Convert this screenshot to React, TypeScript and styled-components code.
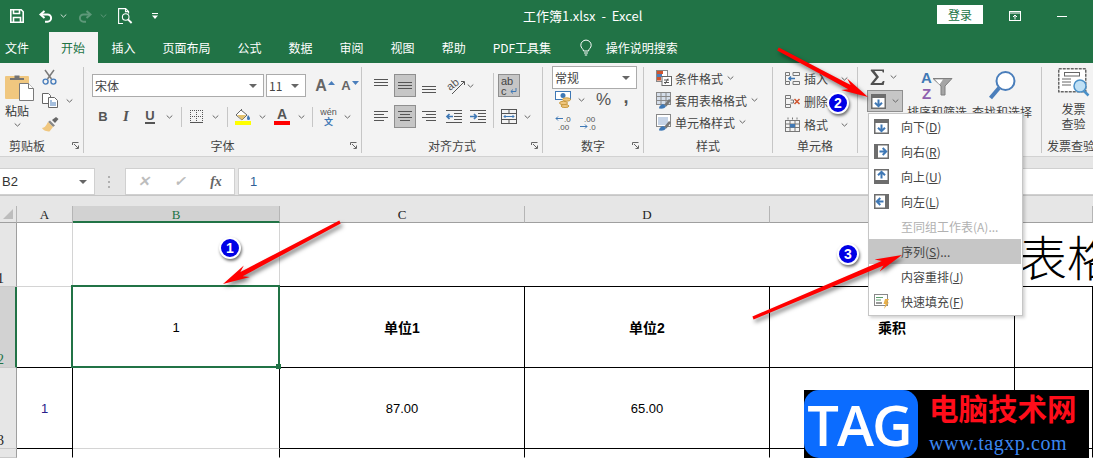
import React from "react";
import styled, { createGlobalStyle } from "styled-components";

const UI = `"Noto Sans CJK SC", "Noto Sans", sans-serif`;
const LATIN = `"Liberation Sans", "Noto Sans CJK SC", sans-serif`;
const GREEN = "#217346";

const Global = createGlobalStyle`
  html, body { margin: 0; padding: 0; background: #fff; }
  body { font-family: ${UI}; font-size: 12px; color: #444; }
  svg { overflow: visible; }
`;

const Page = styled.div`
  position: relative; width: 1093px; height: 458px; overflow: hidden; background: #fff;
`;
const TitleBar = styled.div`
  display: flex; align-items: center; height: 32px; background: ${GREEN}; color: #fff;
`;
const Qat = styled.div`
  display: flex; align-items: center; width: 523px; padding-left: 10px; box-sizing: border-box;
`;
const QatSlot = styled.span<{ $ml?: number }>`
  display: flex; margin-left: ${p => p.$ml ?? 0}px;
`;
const DocTitle = styled.div`
  font-family: ${UI}; font-size: 13px; line-height: 18px; white-space: pre;
`;
const WindowControls = styled.div`
  display: flex; align-items: center; margin-left: auto; padding-right: 26px;
`;
const Login = styled.div`
  width: 46px; height: 19px; background: #fff; color: ${GREEN}; text-align: center;
  line-height: 19px; font-size: 12px; margin-top: -3px;
`;
const TabBar = styled.div`
  display: flex; align-items: stretch; height: 31px; background: ${GREEN}; padding-left: 5px;
  color: #fff; box-sizing: border-box;
`;
const Tab = styled.div<{ $active?: boolean; $file?: boolean }>`
  display: flex; align-items: center; padding: ${p => (p.$file ? "0" : p.$active ? "0 13px 0 12px" : "0 13.5px")};
  margin-right: ${p => (p.$file ? 20 : 0)}px;
  background: ${p => (p.$active ? "#f3f3f3" : "transparent")};
  color: ${p => (p.$active ? GREEN : "#fff")};
  font-size: 12px; white-space: nowrap;
`;
const TellMe = styled.div`
  display: flex; align-items: center; gap: 14px; margin-left: 15px; font-size: 12px;
`;
const Ribbon = styled.div`
  display: flex; height: 94px; box-sizing: border-box; padding-top: 4px; background: #f3f3f3;
  border-bottom: 1px solid #d2d2d2; color: #444;
`;
const Group = styled.div<{ $w: number; $last?: boolean }>`
  display: flex; flex-direction: column; flex: none; width: ${p => p.$w}px; height: 86px; box-sizing: border-box;
  border-right: ${p => (p.$last ? "none" : "1px solid #c6c6c6")};
`;
const GroupBody = styled.div<{ $pl?: number; $row?: boolean }>`
  flex: 1; min-height: 0; display: flex; flex-direction: ${p => (p.$row ? "row" : "column")};
  padding-left: ${p => p.$pl ?? 0}px;
`;
const GroupLabel = styled.div<{ $left?: number }>`
  position: relative; flex: none; height: 14px; line-height: 14px; font-size: 12px; white-space: nowrap;
  text-align: ${p => (p.$left ? "left" : "center")}; padding-left: ${p => p.$left ?? 0}px; color: #444;
`;
const Launcher = styled.span`
  position: absolute; right: 4px; top: 3px; display: flex;
`;
const Stack = styled.div<{ $gap?: number; $pt?: number; $w?: number; $ml?: number; $center?: boolean }>`
  display: flex; flex-direction: column; gap: ${p => p.$gap ?? 0}px; padding-top: ${p => p.$pt ?? 0}px;
  margin-left: ${p => p.$ml ?? 0}px; ${p => (p.$w ? `width: ${p.$w}px;` : "")}
  ${p => (p.$center ? "align-items: center;" : "")} flex: none;
`;
const ToolRow = styled.div<{ $h?: number; $mt?: number }>`
  display: flex; align-items: center; height: ${p => p.$h ?? 23}px; margin-top: ${p => p.$mt ?? 0}px;
`;
const Tool = styled.div<{ $w: number; $ml?: number; $mt?: number; $on?: boolean; $h?: number }>`
  display: flex; align-items: center; justify-content: center; flex: none; width: ${p => p.$w}px;
  margin-left: ${p => p.$ml ?? 0}px; margin-top: ${p => p.$mt ?? 0}px; height: ${p => p.$h ?? 23}px; box-sizing: border-box;
  ${p => (p.$on ? "background: #c6c6c6; border: 1px solid #8f8f8f;" : "")}
  font-family: ${LATIN}; color: #555;
`;
const BoldGlyph = styled.span`
  font-weight: 700; font-size: 13px; color: #555;
`;
const ItalicGlyph = styled.span`
  font-family: "Liberation Serif", serif; font-style: italic; font-weight: 700; font-size: 15px; color: #555;
`;
const UnderGlyph = styled.span`
  font-weight: 700; font-size: 13px; color: #555; border-bottom: 2px solid #555; line-height: 13px;
`;
const SizeA = styled.span<{ $s: number }>`
  font-family: ${LATIN}; font-weight: 700; font-size: ${p => p.$s}px; color: #666; line-height: 1;
`;
const SizeMark = styled.span`
  display: flex; align-self: flex-start; margin: 7px 0 0 1px;
`;
const ColorA = styled.span<{ $c: string }>`
  display: flex; flex-direction: column; align-items: center; width: 16px;
  &::after { content: ""; width: 16px; height: 4px; background: ${p => p.$c}; }
`;
const ColorAGlyph = styled.span`
  font-family: ${LATIN}; font-weight: 700; font-size: 14px; line-height: 13px; color: #555;
`;
const Pinyin = styled.span`
  display: flex; flex-direction: column; align-items: center; font-size: 9px; line-height: 10px; color: #555;
  font-family: ${LATIN};
  b { font-weight: 700; color: #3f78b5; font-family: ${UI}; line-height: 10px; font-size: 9px; }
`;
const Percent = styled.span`
  font-family: ${LATIN}; font-size: 17px; color: #555;
`;
const Comma = styled.span`
  font-family: ${LATIN}; font-size: 18px; font-weight: 700; color: #555; line-height: 10px; margin-top: -6px;
`;
const Divider = styled.div<{ $h?: number; $ml?: number }>`
  flex: none; width: 1px; height: ${p => p.$h ?? 20}px; background: #c6c6c6; margin-left: ${p => p.$ml ?? 0}px;
`;
const Combo = styled.div<{ $w: number; $mt?: number }>`
  display: flex; align-items: center; justify-content: space-between; flex: none; width: ${p => p.$w}px;
  height: 23px; box-sizing: border-box; margin-top: ${p => p.$mt ?? 0}px; background: #fff; border: 1px solid #ababab;
  padding: 0 6px 0 2px; font-size: 12px; color: #444;
`;
const Triangle = styled.span`
  width: 0; height: 0; border-left: 4px solid transparent; border-right: 4px solid transparent;
  border-top: 4px solid #666;
`;
const PasteText = styled.div`
  font-size: 12px; line-height: 14px; margin-top: 3px; color: #333; width: 24px;
`;
const ListRow = styled.div<{ $h: number; $gap: number }>`
  display: flex; align-items: center; gap: ${p => p.$gap}px; height: ${p => p.$h}px; white-space: nowrap;
  font-size: 12px;
`;
const CaretGap = styled.span`
  margin-left: 1px; display: flex;
`;
const FillButton = styled.div`
  display: flex; align-items: center; gap: 6px; width: 36px; height: 22px; box-sizing: border-box; padding-left: 3px;
  background: #c6c6c6; border: 1px solid #8f8f8f; margin-top: 5px;
`;
const SumRow = styled.div`
  display: flex; align-items: center; gap: 5px; height: 17px; padding-left: 3px; margin-top: 1px;
`;
const TallButton = styled.div<{ $w: number; $ml: number }>`
  display: flex; flex-direction: column; align-items: center; flex: none; width: ${p => p.$w}px;
  margin-left: ${p => p.$ml}px; padding-top: 3px; font-size: 12px; white-space: nowrap;
`;
const TallIcon = styled.div`
  display: flex; align-items: center; justify-content: center; height: 31px;
`;
const TallText = styled.div<{ $mt?: number }>`
  margin-top: ${p => p.$mt ?? 0}px; line-height: 15px; text-align: center; color: #444;
`;
const FormulaBar = styled.div`
  display: flex; align-items: stretch; height: 39px; box-sizing: border-box; padding-top: 11px; background: #e6e6e6;
  border-bottom: 1px solid #c6c6c6;
`;
const NameBox = styled.div`
  display: flex; align-items: center; justify-content: space-between; width: 96px; box-sizing: border-box;
  background: #fff; border: 1px solid #d0d0d0; margin-left: -1px; padding: 0 7px 0 2px;
  font-family: ${LATIN}; font-size: 13px; color: #333;
`;
const Grip = styled.div`
  display: flex; flex-direction: column; justify-content: center; gap: 3px; margin: 0 14px 0 13px; width: 3px;
  i { display: block; width: 2px; height: 2px; background: #b0b0b0; }
`;
const FormulaButtons = styled.div`
  display: flex; align-items: center; width: 110px; box-sizing: border-box; background: #fff; border: 1px solid #d0d0d0;
`;
const FxSlot = styled.div<{ $dim?: boolean }>`
  display: flex; align-items: center; justify-content: center; width: 36px; font-family: "Liberation Serif", serif;
  font-style: italic; font-size: 14px; font-weight: 700; color: ${p => (p.$dim ? "#bdbdbd" : "#666")};
`;
const FormulaInput = styled.div`
  flex: 1; display: flex; align-items: center; margin-left: 3px; padding-left: 11px; background: #fff;
  border: 1px solid #d0d0d0; border-right: none; font-family: ${LATIN}; font-size: 13px; color: #2f5f97;
`;
const Sheet = styled.div`
  display: grid; grid-template-columns: 17px 56px 207px 245px 245px 245px 78px;
  grid-template-rows: 17px 64px 81px 81px 9px; padding-top: 10px; background: #e6e6e6;
`;
const Corner = styled.div`
  background: #e6e6e6; border-right: 1px solid #b5b5b5; border-bottom: 1px solid #9f9f9f; box-sizing: border-box;
  display: flex; align-items: flex-end; justify-content: flex-end; padding: 0 3px 3px 0;
  &::after { content: ""; border-left: 10px solid transparent; border-bottom: 10px solid #bdbdbd; }
`;
const ColHead = styled.div<{ $sel?: boolean }>`
  display: flex; align-items: center; justify-content: center; box-sizing: border-box; padding-top: 2px;
  font-family: "Liberation Serif", serif; font-size: 13px;
  background: ${p => (p.$sel ? "#d2d2d2" : "#e6e6e6")};
  color: ${p => (p.$sel ? GREEN : "#222")};
  border-right: 1px solid #b5b5b5;
  border-bottom: ${p => (p.$sel ? `2px solid ${GREEN}` : "1px solid #9f9f9f")};
`;
const RowHead = styled.div<{ $sel?: boolean; $dark?: boolean }>`
  display: flex; align-items: flex-end; box-sizing: border-box; font-family: "Liberation Serif", serif; font-size: 14px;
  line-height: 14px; overflow: hidden; margin-left: 0;
  background: ${p => (p.$sel ? "#d2d2d2" : "#e6e6e6")};
  color: ${p => (p.$sel ? GREEN : "#222")};
  border-right: ${p => (p.$sel ? `2px solid ${GREEN}` : "1px solid #9f9f9f")};
  border-bottom: 1px solid ${p => (p.$dark ? "#bdbdbd" : "#c9c9c9")};
  span { margin-left: -3px; }
`;
const Cell = styled.div<{ $b?: string; $r?: string }>`
  display: flex; align-items: center; justify-content: center; box-sizing: border-box; background: #fff;
  border-bottom: 1px solid ${p => p.$b ?? "#000"}; border-right: 1px solid ${p => p.$r ?? "#000"};
  font-family: ${LATIN}; font-size: 13px; color: #000;
`;
const MergedTitle = styled.div`
  grid-column: span 4; display: flex; align-items: center; justify-content: flex-start; overflow: hidden;
  box-sizing: border-box; background: #fff; border-bottom: 1px solid #000; padding: 0 0 0 739px;
  font-family: "Noto Sans CJK SC", sans-serif; font-weight: 300; font-size: 48px; line-height: 56px; color: #000;
  white-space: nowrap;
`;
const HeadCell = styled(Cell)`
  font-family: ${LATIN}; font-weight: 700; font-size: 14px;
`;
const SeqNumber = styled(Cell)`
  color: #27208a; padding-top: 1px;
`;
const ActiveCell = styled(Cell)`
  position: relative; z-index: 1; padding-top: 1px;
  &::before { content: ""; position: absolute; inset: -2px -1px -1px -2px; border: 2px solid ${GREEN}; pointer-events: none; }
  &::after { content: ""; position: absolute; right: -2px; bottom: -2px; width: 5px; height: 5px; background: ${GREEN}; }
`;
const Menu = styled.div`
  position: absolute; left: 868px; top: 113px; width: 155px; height: 203px; box-sizing: border-box; padding: 0 1px 0 0;
  background: #fff; border: 1px solid #c6c6c6; box-shadow: 2px 2px 3px rgba(0, 0, 0, 0.18); z-index: 5;
`;
const MenuItem = styled.div<{ $hi?: boolean; $off?: boolean }>`
  display: flex; align-items: center; height: 25px; background: ${p => (p.$hi ? "#c6c6c6" : "transparent")};
  color: ${p => (p.$off ? "#b1b1b1" : "#444")}; font-size: 12px; white-space: nowrap; padding-left: 5px;
  u { text-underline-offset: 1px; }
`;
const MenuIcon = styled.span`
  display: flex; width: 27px; flex: none;
`;
const ArrowLayer = styled.svg`
  position: absolute; left: 0; top: 0; z-index: 6; pointer-events: none; overflow: visible;
  polygon { filter: drop-shadow(2px 3px 2px rgba(0, 0, 0, 0.5)); }
`;
const Badge = styled.div<{ $x: number; $y: number }>`
  position: absolute; left: ${p => p.$x - 11}px; top: ${p => p.$y - 11}px; width: 22px; height: 22px; box-sizing: border-box;
  border-radius: 50%; background: #0000e6; border: 2px solid #fff; box-shadow: 1px 2px 3px rgba(0, 0, 0, 0.55);
  color: #fff; font-family: ${LATIN}; font-weight: 700; font-size: 14px; line-height: 18px; text-align: center; z-index: 7;
`;
const Logo = styled.div`
  position: absolute; left: 804px; top: 390px; width: 285px; height: 68px; display: flex; background: #000; z-index: 4;
`;
const LogoMark = styled.div`
  width: 114px; height: 68px; border-radius: 15px; background: #0b6cff; color: #fff; display: flex;
  align-items: center; justify-content: center; font-family: "Open Sans", sans-serif; font-weight: 600; font-size: 56px;
  letter-spacing: -2px; line-height: 68px; padding-right: 4px; box-sizing: border-box;
`;
const LogoText = styled.div`
  display: flex; flex-direction: column; padding-left: 11px;
`;
const LogoCn = styled.div`
  font-family: "Noto Sans CJK SC", sans-serif; font-weight: 700; color: #ff0d1a; font-size: 29.5px; line-height: 34px;
  margin-top: 0; white-space: nowrap;
`;
const LogoUrl = styled.div`
  font-family: "Liberation Serif", serif; color: #3b86f0; font-size: 20px; line-height: 22px; margin-top: 8px;
  white-space: nowrap; letter-spacing: 0.55px;
`;

/* ---------- drawings ---------- */
const Caret = ({ c = "#666" }: { c?: string }) => (
  <svg width="7" height="4" viewBox="0 0 7 4"><path d="M.7.5l2.8 2.6L6.3.5" fill="none" stroke={c} /></svg>
);
const LaunchIcon = () => (
  <svg width="7" height="7" viewBox="0 0 7 7" fill="none" stroke="#666"><path d="M.5 3V.5H6.5M2 2l4 4M6.5 3.5v3H3.5" /></svg>
);
const SaveIcon = () => (
  <svg width="14" height="14" viewBox="0 0 14 14" fill="none" stroke="#fff" strokeWidth="1.6">
    <path d="M.8.8h10.4l2 2v10.4H.8z" /><path d="M3.5 1v3.5h6V1" /><path d="M3.5 13V8.5h7V13" />
  </svg>
);
const UndoIcon = ({ c = "#fff", flip }: { c?: string; flip?: boolean }) => (
  <svg width="14" height="13" viewBox="0 0 14 13" fill="none" stroke={c} strokeWidth="2" transform={flip ? "scale(-1 1)" : undefined}>
    <path d="M5.5 1L1.5 4.5 5.5 8" /><path d="M2 4.5h6.5a3.6 3.6 0 0 1 0 7.2H6" />
  </svg>
);
const PreviewIcon = () => (
  <svg width="15" height="16" viewBox="0 0 15 16" fill="none" stroke="#fff" strokeWidth="1.1">
    <path d="M5 15.5H.6V.6h7l3 3v2" /><path d="M7.5.6v3h3" /><circle cx="7.7" cy="9" r="3.3" /><path d="M10 11.4l3.6 3.6" strokeWidth="1.8" />
  </svg>
);
const CustomizeIcon = () => (
  <svg width="6" height="6" viewBox="0 0 6 6" fill="#fff"><rect y="0" width="6" height="1" /><path d="M0 2.5h6L3 6z" /></svg>
);
const RestoreIcon = () => (
  <svg width="12" height="10" viewBox="0 0 12 10" fill="none" stroke="#fff"><rect x=".5" y=".5" width="11" height="9" /><path d="M.5 2h11M6 8.5V4M4 6l2-2 2 2" /></svg>
);
const MinIcon = () => <svg width="10" height="1" viewBox="0 0 10 1"><rect width="10" height="1" fill="#fff" /></svg>;
const BulbIcon = () => (
  <svg width="12" height="16" viewBox="0 0 12 16" fill="none" stroke="#fff">
    <path d="M3.5 11c0-2-2.7-3-2.7-5.7a5.2 5.2 0 0 1 10.4 0C11.2 8 8.5 9 8.5 11z" /><path d="M4 13h4M4.8 15h2.4" />
  </svg>
);
const PasteIcon = () => (
  <svg width="29" height="27" viewBox="0 0 29 27">
    <path d="M1 2h22a1 1 0 0 1 1 1v22H1a1 1 0 0 1-1-1V3a1 1 0 0 1 1-1z" fill="#f0c77f" />
    <path d="M5 6V4h4.5V1.5h5V4H19v2z" fill="#737373" />
    <path d="M14.5 9.5h9l5 5v12h-14z" fill="#fff" stroke="#7a7a7a" />
    <path d="M23.5 9.5v5h5" fill="#fff" stroke="#7a7a7a" />
  </svg>
);
const ScissorsIcon = () => (
  <svg width="15" height="16" viewBox="0 0 15 16" fill="none">
    <path d="M3 1l6.5 9M12 1L5.5 10" stroke="#7a7a7a" strokeWidth="1.5" />
    <circle cx="3.6" cy="12.6" r="2.5" stroke="#4a7ebb" strokeWidth="1.4" /><circle cx="11.4" cy="12.6" r="2.5" stroke="#4a7ebb" strokeWidth="1.4" />
  </svg>
);
const CopyIcon = () => (
  <svg width="16" height="15" viewBox="0 0 16 15" fill="#fff" stroke="#666">
    <path d="M.5.5h6l2 2v8h-8z" /><path d="M6.5 4.5h6l3 3v7h-9z" />
    <path d="M8 8h2M8 10h6M8 12h6" stroke="#4a7ebb" />
  </svg>
);
const BrushIcon = () => (
  <svg width="17" height="15" viewBox="0 0 17 15">
    <path d="M10 3l3 3 3.5-4L14 0z" fill="#666" /><path d="M8 3.5l5 5-2 1.5-5-5z" fill="#888" />
    <path d="M6 5l5 5-3.5 4.5C5 14.5 1 13.5 0 11c2.5 0 4.5-3 6-6z" fill="#f0c77f" />
  </svg>
);
const BorderIcon = () => (
  <svg width="13" height="13" viewBox="0 0 13 13" stroke="#555" strokeDasharray="1 1" fill="none">
    <path d="M.5 0v13M6.5 0v13M12.5 0v13M0 .5h13M0 6.5h13" /><path d="M0 12.5h13" strokeDasharray="none" />
  </svg>
);
const FillColorIcon = () => (
  <svg width="16" height="12" viewBox="0 0 16 12">
    <path d="M6 1l6 5-5 5-6-5z" fill="#fff" stroke="#666" /><path d="M2 6h9l-4 5z" fill="#e4c26b" /><path d="M13 6c1.2 1.6 2 2.5 2 3.5a1.5 1.5 0 0 1-3 0c0-.8.4-2 1-3.5z" fill="#3f78b5" /><path d="M4 3L7 0" stroke="#666" />
  </svg>
);
const AlignV = ({ y }: { y: number }) => (
  <svg width="14" height="15" viewBox="0 0 14 15" stroke="#555">
    {[0, 3, 6].map(d => <path key={d} d={`M0 ${y + d + 0.5}H14`} />)}
  </svg>
);
const AlignH = ({ kind }: { kind: "l" | "c" | "r" }) => (
  <svg width="14" height="13" viewBox="0 0 14 13" stroke="#555">
    {[1, 4, 7, 10].map((y, i) => {
      const short = i % 2 === 1;
      const x1 = kind === "r" && short ? 4 : kind === "c" && short ? 2 : 0;
      const x2 = kind === "l" && short ? 10 : kind === "c" && short ? 12 : 14;
      return <path key={y} d={`M${x1} ${y + 0.5}H${x2}`} />;
    })}
  </svg>
);
const IndentIcon = ({ right }: { right?: boolean }) => (
  <svg width="16" height="13" viewBox="0 0 16 13">
    <g stroke="#555"><path d="M0 .5h16M8 3.5h8M8 6.5h8M8 9.5h8M0 12.5h16" /></g>
    <path d={right ? "M0 6.5h6M4 4l2.5 2.5L4 9" : "M7 6.5H1M3.5 4L1 6.5 3.5 9"} stroke="#3f78b5" strokeWidth="1.7" fill="none" />
  </svg>
);
const OrientIcon = () => (
  <svg width="19" height="19" viewBox="0 0 19 19">
    <text x="1" y="12" fontSize="11" fontFamily="Liberation Sans" fill="#555" transform="rotate(-38 7 9)">ab</text>
    <path d="M6 18L18 6M15 5.500h3.500V9" stroke="#555" fill="none" />
  </svg>
);
const WrapIcon = () => (
  <svg width="18" height="20" viewBox="0 0 18 20">
    <text x="1" y="9" fontSize="11" fontFamily="Liberation Sans" fill="#444">ab</text>
    <text x="1" y="19" fontSize="11" fontFamily="Liberation Sans" fill="#444">c</text>
    <path d="M16 12v3.500h-5M13 13.500l-2.200 2 2.200 2" stroke="#3f78b5" fill="none" />
  </svg>
);
const MergeIcon = () => (
  <svg width="16" height="15" viewBox="0 0 16 15" fill="none" stroke="#555">
    <rect x=".5" y=".5" width="15" height="14" /><path d="M.5 4.500h15M.5 10.500h15M8 .5v4M8 10.500v4" />
    <path d="M3 7.500h10M4.500 6L3 7.500 4.500 9M11.500 6L13 7.500 11.500 9" stroke="#3f78b5" />
  </svg>
);
const CurrencyIcon = () => (
  <svg width="17" height="17" viewBox="0 0 17 17">
    <rect x=".5" y=".5" width="15" height="8" fill="#fff" stroke="#3f78b5" /><circle cx="8" cy="4.500" r="2.500" fill="#3f78b5" />
    <ellipse cx="11.500" cy="8.500" rx="4" ry="1.700" fill="#f0c77f" stroke="#c99a3f" /><ellipse cx="8.500" cy="12" rx="4" ry="1.700" fill="#f0c77f" stroke="#c99a3f" /><ellipse cx="10" cy="15" rx="4" ry="1.500" fill="#f0c77f" stroke="#c99a3f" />
  </svg>
);
const DecimalIcon = ({ more }: { more?: boolean }) => (
  <svg width="17" height="15" viewBox="0 0 17 15" fontFamily="Liberation Sans" fontSize="8" fill="#555">
    {more ? (<><text x="5" y="6.500">.00</text><text x="10" y="14.500">.0</text><path d="M1 11.500h7M6 9.500l2 2-2 2" stroke="#3f78b5" fill="none" /></>)
      : (<><text x="9" y="6.500">.0</text><text x="3" y="14.500">.00</text><path d="M8 3.500H1M3 1.500l-2 2 2 2" stroke="#3f78b5" fill="none" /></>)}
  </svg>
);
const CondIcon = () => (
  <svg width="16" height="16" viewBox="0 0 16 16">
    <rect x=".5" y=".5" width="11" height="11" fill="#fff" stroke="#888" /><rect x="1" y="1" width="6" height="3" fill="#d0542e" /><rect x="1" y="7" width="4" height="3.500" fill="#d0542e" /><rect x="1" y="4" width="5" height="3" fill="#4a7ebb" />
    <rect x="6" y="6.500" width="9.500" height="9" fill="#fff" stroke="#666" /><path d="M8 10h5M8 12.500h5M12 8.500l-3 5.500" stroke="#555" fill="none" />
  </svg>
);
const TableIcon = ({ light }: { light?: boolean }) => (
  <svg width="16" height="17" viewBox="0 0 16 17">
    <rect x=".5" y=".5" width="14" height="12" fill={light ? "#fff" : "#d5deea"} stroke="#888" />
    {light ? <rect x="2" y="3" width="10" height="8" fill="#c5d3e6" /> : <path d="M.5 4.500h14M.5 8.500h14M5 .5v12M10 .5v12" stroke="#888" />}
    <path d="M8 13l5-6 2 1.500-4.500 6z" fill="#777" /><path d="M3 16.500c0-2 1.500-4 4-4.500l3 2c-.5 2-3 3-7 2.500z" fill="#3f78b5" />
  </svg>
);
const CellGrid = ({ children }: { children?: React.ReactNode }) => (
  <svg width="15" height="15" viewBox="0 0 15 15">
    <g fill="none" stroke="#777">{children}</g>
  </svg>
);
const InsertIcon = () => (
  <CellGrid>
    <path d="M.5 1.500h4v3h-4zM8 4.500h6.500v-3H8zM.5 10.500h4v3h-4zM8 13.500V10.500h6.500v3zM.5 4.500v6" />
    <path d="M10 7.500H4M6 5.500l-2 2 2 2" stroke="#3f78b5" strokeWidth="1.500" />
  </CellGrid>
);
const DeleteIcon = () => (
  <CellGrid>
    <path d="M.5 1.500h5v3h-5zM.5 4.500v6M.5 10.500h5v3h-5zM5.500 6h3v3h-3" />
    <path d="M9.500 5l5 5M14.500 5l-5 5" stroke="#d0542e" strokeWidth="1.500" />
  </CellGrid>
);
const FormatIcon = () => (
  <CellGrid>
    <rect x=".5" y="3.500" width="14" height="11" />
    <path d="M.5 7h14M.5 10.500h14M5 3.500v11M10 3.500v11M3 .5v2M7.500 .5v2M12 .5v2" />
    <rect x="5" y="7" width="5" height="3.500" fill="#3f78b5" stroke="none" />
  </CellGrid>
);
const SumIcon = () => (
  <svg width="15" height="16" viewBox="0 0 15 16"><path d="M1 .5h13v3h-1.200l-.6-1.500H4.500L9 8 4 14h7.500l1.500-2h1.500l-.8 4H.6v-1.200L6 8 .6 1.500z" fill="#505050" /></svg>
);
const FillIcon = ({ dir, bar = "#6d6d6d" }: { dir: "d" | "r" | "u" | "l"; bar?: string }) => {
  const a = { d: 0, l: 90, u: 180, r: 270 }[dir];
  return (
    <svg width="15" height="15" viewBox="0 0 15 15">
      <g transform={`rotate(${a} 7.500 7.500)`}>
        <rect x=".75" y=".75" width="13.500" height="13.500" fill="#fff" stroke={bar} strokeWidth="1.500" />
        <rect x="0" y="0" width="15" height="4" fill={bar} />
        <path d="M7.500 5.500v6.500M4 8.700l3.500 3.500L11 8.700" fill="none" stroke="#3f78b5" strokeWidth="2" />
      </g>
    </svg>
  );
};
const FlashIcon = () => (
  <svg width="16" height="15" viewBox="0 0 16 15">
    <rect x=".5" y=".5" width="13" height="11" fill="#fff" stroke="#888" /><path d="M2 3.500h7M2 6h5" stroke="#5a9d6b" /><rect x="2" y="8" width="6" height="2" fill="#9a9a9a" />
    <path d="M11 5h4l-2 3.500h2L10 15l1.500-5H9.500z" fill="#e8b04a" />
  </svg>
);
const SortIcon = () => (
  <svg width="32" height="29" viewBox="0 0 32 29" fontFamily="Liberation Sans" fontWeight="700" fontSize="15">
    <text x="0" y="12" fill="#3f78b5">A</text><text x="1" y="28" fill="#8e5fae">Z</text>
    <path d="M12 7.500h19l-7 7.500v9h-4v-9z" fill="#a5a5a5" stroke="#808080" />
    <path d="M14 8.500h8l-3.500 5z" fill="#fff" />
  </svg>
);
const FindIcon = () => (
  <svg width="28" height="31" viewBox="0 0 28 31" fill="none">
    <circle cx="17.500" cy="11" r="9" stroke="#4a7ebb" strokeWidth="2" fill="#fff" /><path d="M11 18L2.500 28" stroke="#4a7ebb" strokeWidth="4" />
  </svg>
);
const InvoiceIcon = () => (
  <svg width="32" height="29" viewBox="0 0 32 29" fill="none">
    <rect x=".75" y=".75" width="27" height="23" fill="#fff" stroke="#666" strokeWidth="1.500" strokeDasharray="3 1" />
    <rect x="6.500" y="4.500" width="15" height="3.500" stroke="#666" />
    <path d="M4 11h9M4 14h9M4 17h9" stroke="#666" />
    <circle cx="22" cy="18" r="6" fill="#bfe0f5" stroke="#4a90c8" strokeWidth="1.500" /><path d="M26 23l4.500 4.500" stroke="#4a90c8" strokeWidth="2.500" />
  </svg>
);
const SizeUp = () => <svg width="7" height="4" viewBox="0 0 7 4"><path d="M0 4l3.500-4L7 4z" fill="#4a7ebb" /></svg>;
const SizeDown = () => <svg width="7" height="4" viewBox="0 0 7 4"><path d="M0 0l3.500 4L7 0z" fill="#4a7ebb" /></svg>;

const arrowPoints = (x1: number, y1: number, x2: number, y2: number) => {
  const len = Math.hypot(x2 - x1, y2 - y1);
  const ux = (x2 - x1) / len, uy = (y2 - y1) / len;
  const nx = -uy, ny = ux;
  const at = (back: number, side: number) => `${(x2 - ux * back + nx * side).toFixed(1)},${(y2 - uy * back + ny * side).toFixed(1)}`;
  return [
    at(len, 1.6), at(21, 2.4), at(27, 6.5), at(0, 0), at(27, -6.5), at(21, -2.4), at(len, -1.6),
  ].join(" ");
};

const Arrows = () => (
  <ArrowLayer width="1093" height="458" viewBox="0 0 1093 458">
    <polygon points={arrowPoints(340, 222, 223, 284)} fill="#f00" />
    <polygon points={arrowPoints(778, 49, 868, 97)} fill="#f00" />
    <polygon points={arrowPoints(753, 318, 902, 255)} fill="#f00" />
  </ArrowLayer>
);

const tabs = ["插入", "页面布局", "公式", "数据", "审阅", "视图", "帮助", "PDF工具集"];

export default function App() {
  return (
    <Page>
      <Global />
      <TitleBar>
        <Qat>
          <QatSlot><SaveIcon /></QatSlot>
          <QatSlot $ml={15}><UndoIcon /></QatSlot>
          <QatSlot $ml={7}><Caret c="#cfe0d6" /></QatSlot>
          <QatSlot $ml={11}><UndoIcon c="#5d9879" flip /></QatSlot>
          <QatSlot $ml={8}><Caret c="#5d9879" /></QatSlot>
          <QatSlot $ml={11}><PreviewIcon /></QatSlot>
          <QatSlot $ml={19}><CustomizeIcon /></QatSlot>
        </Qat>
        <DocTitle>工作簿1.xlsx  -  Excel</DocTitle>
        <WindowControls>
          <Login>登录</Login>
          <QatSlot $ml={26}><RestoreIcon /></QatSlot>
          <QatSlot $ml={36}><MinIcon /></QatSlot>
        </WindowControls>
      </TitleBar>
      <TabBar>
        <Tab $file>文件</Tab>
        <Tab $active>开始</Tab>
        {tabs.map(t => <Tab key={t}>{t}</Tab>)}
        <TellMe><BulbIcon /><span>操作说明搜索</span></TellMe>
      </TabBar>
      <Ribbon>
        <Group $w={84}>
          <GroupBody $pl={5} $row>
            <Stack $pt={7} $w={37} >
              <PasteIcon />
              <PasteText>粘贴</PasteText>
              <Tool $w={24} $h={14}><Caret /></Tool>
            </Stack>
            <Stack $pt={2}>
              <Tool $w={15} $h={16}><ScissorsIcon /></Tool>
              <ToolRow $h={15} $mt={8}>
                <CopyIcon /><QatSlot $ml={8}><Caret /></QatSlot>
              </ToolRow>
              <Tool $w={17} $h={15} $mt={9}><BrushIcon /></Tool>
            </Stack>
          </GroupBody>
          <GroupLabel $left={9}>剪贴板<Launcher><LaunchIcon /></Launcher></GroupLabel>
        </Group>
        <Group $w={278}>
          <GroupBody $pl={8}>
            <ToolRow $mt={7}>
              <Combo $w={172}>宋体<Triangle /></Combo>
              <Tool $w={2} />
              <Combo $w={40}><span>11</span><Triangle /></Combo>
              <Tool $w={22} $ml={8}><SizeA $s={16}>A</SizeA><SizeMark><SizeUp /></SizeMark></Tool>
              <Tool $w={22} $ml={3}><SizeA $s={13}>A</SizeA><SizeMark><SizeDown /></SizeMark></Tool>
            </ToolRow>
            <ToolRow $mt={8}>
              <Tool $w={22}><BoldGlyph>B</BoldGlyph></Tool>
              <Tool $w={24}><ItalicGlyph>I</ItalicGlyph></Tool>
              <Tool $w={24}><UnderGlyph>U</UnderGlyph></Tool>
              <Tool $w={14}><Caret /></Tool>
              <Divider $ml={5} />
              <Tool $w={29}><BorderIcon /></Tool>
              <Tool $w={9}><Caret /></Tool>
              <Divider $ml={7} />
              <Tool $w={30}><ColorA $c="#ffff00"><FillColorIcon /></ColorA></Tool>
              <Tool $w={8}><Caret /></Tool>
              <Tool $w={32}><ColorA $c="#ff0000"><ColorAGlyph>A</ColorAGlyph></ColorA></Tool>
              <Tool $w={6}><Caret /></Tool>
              <Divider $ml={8} />
              <Tool $w={31}><Pinyin>wén<b>文</b></Pinyin></Tool>
              <Tool $w={6}><Caret /></Tool>
            </ToolRow>
          </GroupBody>
          <GroupLabel>字体<Launcher><LaunchIcon /></Launcher></GroupLabel>
        </Group>
        <Group $w={181}>
          <GroupBody $pl={12} $row>
            <Stack $w={119}>
              <ToolRow $mt={7}>
                <Tool $w={14}><AlignV y={1} /></Tool>
                <Tool $w={22} $ml={6} $on><AlignV y={4} /></Tool>
                <Tool $w={14} $ml={6}><AlignV y={8} /></Tool>
                <Tool $w={19} $ml={10}><OrientIcon /></Tool>
                <Tool $w={7} $ml={2}><Caret /></Tool>
              </ToolRow>
              <ToolRow $mt={8}>
                <Tool $w={14}><AlignH kind="l" /></Tool>
                <Tool $w={22} $ml={6} $on><AlignH kind="c" /></Tool>
                <Tool $w={14} $ml={6}><AlignH kind="r" /></Tool>
                <Tool $w={16} $ml={10}><IndentIcon /></Tool>
                <Tool $w={16} $ml={8}><IndentIcon right /></Tool>
              </ToolRow>
            </Stack>
            <Stack $pt={6}><Divider $h={55} /></Stack>
            <Stack>
              <ToolRow $mt={7}><Tool $w={22} $ml={4} $on><WrapIcon /></Tool></ToolRow>
              <ToolRow $mt={8}>
                <Tool $w={16} $ml={7}><MergeIcon /></Tool>
                <Tool $w={7} $ml={7}><Caret /></Tool>
              </ToolRow>
            </Stack>
          </GroupBody>
          <GroupLabel>对齐方式<Launcher><LaunchIcon /></Launcher></GroupLabel>
        </Group>
        <Group $w={101}>
          <GroupBody $pl={9}>
            <Combo $w={85} $mt={-1}>常规<Triangle /></Combo>
            <ToolRow $mt={2} $h={17}>
              <Tool $w={17} $ml={3} $h={17}><CurrencyIcon /></Tool>
              <Tool $w={7} $ml={6} $h={17}><Caret /></Tool>
              <Tool $w={19} $ml={9} $h={17}><Percent>%</Percent></Tool>
              <Tool $w={6} $ml={10} $h={17}><Comma>,</Comma></Tool>
            </ToolRow>
            <ToolRow $mt={6} $h={16}>
              <Tool $w={17} $ml={3} $h={16}><DecimalIcon /></Tool>
              <Tool $w={17} $ml={7} $h={16}><DecimalIcon more /></Tool>
            </ToolRow>
          </GroupBody>
          <GroupLabel>数字<Launcher><LaunchIcon /></Launcher></GroupLabel>
        </Group>
        <Group $w={129}>
          <GroupBody $pl={12}>
            <ListRow $h={22} $gap={3}><CondIcon />条件格式<CaretGap><Caret /></CaretGap></ListRow>
            <ListRow $h={22} $gap={3}><TableIcon />套用表格格式<CaretGap><Caret /></CaretGap></ListRow>
            <ListRow $h={22} $gap={3}><TableIcon light />单元格样式<CaretGap><Caret /></CaretGap></ListRow>
          </GroupBody>
          <GroupLabel>样式</GroupLabel>
        </Group>
        <Group $w={85}>
          <GroupBody $pl={12}>
            <ListRow $h={23} $gap={4}><InsertIcon />插入<Tool $w={12} $ml={6}><Caret /></Tool></ListRow>
            <ListRow $h={23} $gap={4}><DeleteIcon />删除<Tool $w={12} $ml={6}><Caret /></Tool></ListRow>
            <ListRow $h={23} $gap={4}><FormatIcon />格式<Tool $w={12} $ml={6}><Caret /></Tool></ListRow>
          </GroupBody>
          <GroupLabel>单元格</GroupLabel>
        </Group>
        <Group $w={184}>
          <GroupBody $pl={9} $row>
            <Stack $w={36}>
              <SumRow><SumIcon /><Caret /></SumRow>
              <FillButton><FillIcon dir="d" /><Caret /></FillButton>
            </Stack>
            <TallButton $w={60} $ml={4}><TallIcon><SortIcon /></TallIcon><TallText $mt={3}>排序和筛选</TallText></TallButton>
            <TallButton $w={60} $ml={5}><TallIcon><FindIcon /></TallIcon><TallText $mt={3}>查找和选择</TallText></TallButton>
          </GroupBody>
          <GroupLabel />
        </Group>
        <Group $w={51} $last>
          <GroupBody $pl={12}>
            <TallIcon><InvoiceIcon /></TallIcon>
            <TallText $mt={3}>发票</TallText>
            <TallText>查验</TallText>
          </GroupBody>
          <GroupLabel $left={5}>发票查验</GroupLabel>
        </Group>
      </Ribbon>
      <FormulaBar>
        <NameBox>B2<Triangle /></NameBox>
        <Grip><i /><i /><i /></Grip>
        <FormulaButtons>
          <FxSlot $dim>✕</FxSlot>
          <FxSlot $dim>✓</FxSlot>
          <FxSlot>fx</FxSlot>
        </FormulaButtons>
        <FormulaInput>1</FormulaInput>
      </FormulaBar>
      <Sheet>
        <Corner />
        <ColHead>A</ColHead>
        <ColHead $sel>B</ColHead>
        <ColHead>C</ColHead>
        <ColHead>D</ColHead>
        <ColHead />
        <ColHead />

        <RowHead><span>1</span></RowHead>
        <Cell $b="#d4d4d4" $r="#d4d4d4" />
        <Cell $b="#d4d4d4" $r="#d4d4d4" />
        <MergedTitle>表格</MergedTitle>

        <RowHead $sel><span>2</span></RowHead>
        <Cell />
        <ActiveCell>1</ActiveCell>
        <HeadCell>单位1</HeadCell>
        <HeadCell>单位2</HeadCell>
        <HeadCell>乘积</HeadCell>
        <Cell />

        <RowHead><span>3</span></RowHead>
        <SeqNumber>1</SeqNumber>
        <Cell $b="#d4d4d4" />
        <Cell>87.00</Cell>
        <Cell>65.00</Cell>
        <Cell />
        <Cell />

        <RowHead />
        <Cell $b="transparent" />
        <Cell $b="transparent" />
        <Cell $b="transparent" />
        <Cell $b="transparent" />
        <Cell $b="transparent" />
        <Cell $b="transparent" />
      </Sheet>
      <Menu>
        <MenuItem><MenuIcon><FillIcon dir="d" /></MenuIcon>向下(<u>D</u>)</MenuItem>
        <MenuItem><MenuIcon><FillIcon dir="r" /></MenuIcon>向右(<u>R</u>)</MenuItem>
        <MenuItem><MenuIcon><FillIcon dir="u" /></MenuIcon>向上(<u>U</u>)</MenuItem>
        <MenuItem><MenuIcon><FillIcon dir="l" /></MenuIcon>向左(<u>L</u>)</MenuItem>
        <MenuItem $off><MenuIcon />至同组工作表(A)...</MenuItem>
        <MenuItem $hi><MenuIcon />序列(<u>S</u>)...</MenuItem>
        <MenuItem><MenuIcon />内容重排(<u>J</u>)</MenuItem>
        <MenuItem><MenuIcon><FlashIcon /></MenuIcon>快速填充(<u>F</u>)</MenuItem>
      </Menu>
      <Logo>
        <LogoMark>TAG</LogoMark>
        <LogoText>
          <LogoCn>电脑技术网</LogoCn>
          <LogoUrl>www.tagxp.com</LogoUrl>
        </LogoText>
      </Logo>
      <Arrows />
      <Badge $x={230} $y={248}>1</Badge>
      <Badge $x={838} $y={103}>2</Badge>
      <Badge $x={848} $y={254}>3</Badge>
    </Page>
  );
}
